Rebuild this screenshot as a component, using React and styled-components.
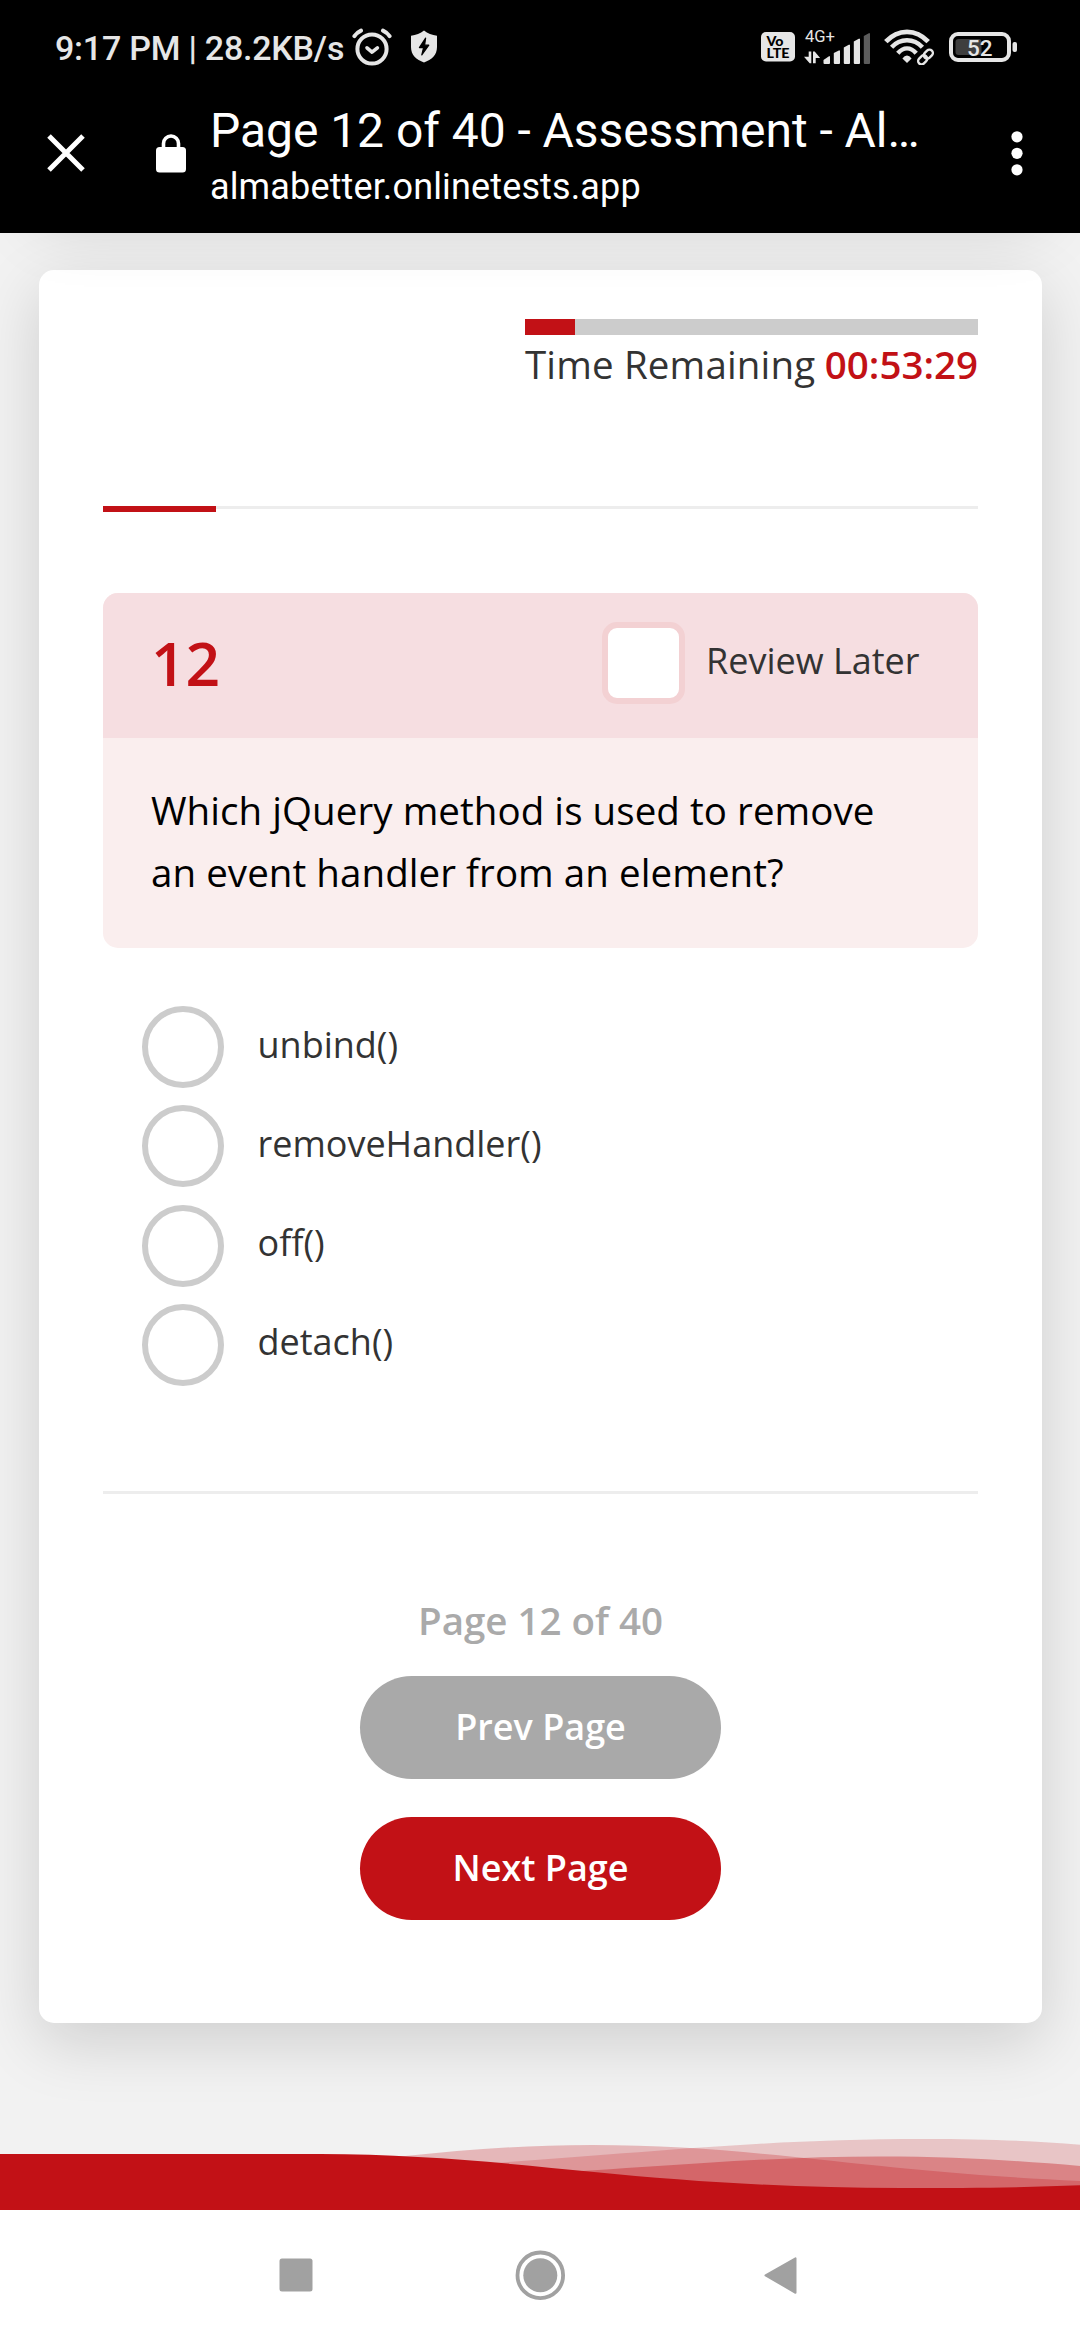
import React, { useState } from "react";
import styled, { createGlobalStyle } from "styled-components";

const RED = "#c21116";
const SANS = '"Open Sans", "Noto Sans", sans-serif';
const SYSTEM = 'Roboto, "Noto Sans", sans-serif';

const GlobalStyle = createGlobalStyle`
  * { box-sizing: border-box; }
  html, body { margin: 0; padding: 0; background: #fff; }
`;

const Screen = styled.div`
  width: 1080px;
  height: 2340px;
  display: flex;
  flex-direction: column;
  overflow: hidden;
  font-family: ${SANS};
  color: #333;
`;

/* ---------- system status bar ---------- */
const StatusBar = styled.div`
  height: 93px;
  flex: none;
  display: flex;
  align-items: center;
  justify-content: space-between;
  padding: 0 63px 0 55px;
  background: #000;
  color: #e6e6e6;
  font-family: ${SYSTEM};
  svg { display: block; flex: none; }
`;
const StatusGroup = styled.div`
  display: flex;
  align-items: center;
`;
const StatusSlot = styled.span`
  display: block;
  margin-left: ${(p) => p.$before || 0}px;
`;
const Clock = styled.span`
  width: 297px;
  padding-top: 2px;
  font-size: 34px;
  line-height: 40px;
  font-weight: 500;
  letter-spacing: -0.23px;
  white-space: nowrap;
`;

/* ---------- browser tab bar ---------- */
const TabBar = styled.header`
  height: 140px;
  flex: none;
  display: flex;
  align-items: center;
  padding: 0 57px 20px 47px;
  background: #000;
  color: #fff;
  font-family: ${SYSTEM};
  svg { display: block; flex: none; }
`;
const TabText = styled.div`
  width: 760px;
  margin-left: 24px;
  padding-top: 6px;
`;
const TabTitle = styled.div`
  font-size: 48px;
  line-height: 56px;
  letter-spacing: -0.05px;
  white-space: nowrap;
`;
const TabUrl = styled.div`
  margin-top: 5px;
  font-size: 36px;
  line-height: 46px;
  letter-spacing: 0.14px;
`;
const IconButton = styled.button`
  display: flex;
  border: 0;
  padding: 0;
  background: none;
  color: inherit;
  margin-right: ${(p) => p.$after || 0}px;
  margin-left: ${(p) => (p.$end ? "auto" : 0)};
`;

/* ---------- page ---------- */
const Page = styled.main`
  position: relative;
  height: 1977px;
  flex: none;
  display: flex;
  flex-direction: column;
  justify-content: space-between;
  padding: 37px 38px 0 39px;
  background: #f2f2f2;
  overflow: hidden;
`;
const shadow = "0 19px 64px rgba(0, 0, 0, 0.15)";
/* the card above, scrolled out of view: only its shadow reaches down */
const ScrolledCard = styled.div`
  position: absolute;
  left: 39px;
  right: 38px;
  top: -330px;
  height: 300px;
  box-shadow: ${shadow};
  pointer-events: none;
`;
const Card = styled.section`
  flex: none;
  padding: 49px 64px 103px;
  border-radius: 15px;
  background: #fff;
  box-shadow: ${shadow};
`;

const Timer = styled.div`
  width: 453px;
  margin-left: auto;
`;
const Track = styled.div`
  height: 16px;
  background: #ccc;
`;
const TrackFill = styled.div`
  height: 100%;
  background: ${RED};
`;
const TimerText = styled.div`
  display: flex;
  justify-content: space-between;
  margin-top: 3px;
  font-size: 38.5px;
  line-height: 52px;
  white-space: nowrap;
`;
const TimerLabel = styled.span`
  letter-spacing: 0.15px;
`;
const TimeLeft = styled.span`
  font-weight: 600;
  color: ${RED};
`;
const PageProgress = styled.div`
  height: 6px;
  margin: 116px 0 81px;
  background: linear-gradient(#ededed 3px, transparent 3px);
`;
const PageProgressFill = styled.div`
  height: 100%;
  background: ${RED};
`;

const Question = styled.article`
  border-radius: 15px;
  overflow: hidden;
  background: #faeeee;
`;
const QuestionHead = styled.div`
  height: 145px;
  display: flex;
  align-items: center;
  justify-content: space-between;
  padding: 0 57px 5px 48px;
  background: #f6dee1;
`;
const Number = styled.span`
  font-size: 60.5px;
  line-height: 80px;
  font-weight: 600;
  color: ${RED};
`;
const Review = styled.label`
  display: flex;
  align-items: center;
  gap: 21px;
`;
const CheckBox = styled.span`
  width: 83px;
  height: 82px;
  border: 6px solid #f3d1d3;
  border-radius: 15px;
  background: #fff;
`;
const ReviewText = styled.span`
  width: 215px;
  padding-bottom: 4px;
  font-size: 36px;
  line-height: 50px;
  white-space: nowrap;
`;
const QuestionText = styled.p`
  margin: 0;
  padding: 41px 48px 45px;
  font-size: 38.5px;
  line-height: 62px;
  letter-spacing: 0.06px;
  color: #000;
`;

const Options = styled.div`
  display: flex;
  flex-direction: column;
  gap: 17.33px;
  padding: 58px 0 105px 39px;
`;
const Option = styled.label`
  height: 82px;
  display: flex;
  align-items: center;
  gap: 33.5px;
`;
const Radio = styled.span`
  width: 82px;
  height: 82px;
  border: 6px solid #ccc;
  border-radius: 50%;
`;
const OptionText = styled.span`
  padding-bottom: 5px;
  font-size: 36px;
  line-height: 50px;
`;
const Divider = styled.div`
  height: 3px;
  background: #ededed;
`;

const Pager = styled.nav`
  display: flex;
  flex-direction: column;
  align-items: center;
  gap: 38px;
  padding-top: 101px;
`;
const PagerText = styled.div`
  margin-bottom: -7px;
  font-size: 38.5px;
  line-height: 50px;
  font-weight: 600;
  color: #aaa;
`;
const PagerButton = styled.button`
  width: 361px;
  height: 103px;
  padding: 0 0 1px;
  border: 0;
  border-radius: 52px;
  background: ${(p) => (p.$primary ? RED : "#a9a9a9")};
  color: #fff;
  font-family: ${SANS};
  font-size: 36px;
  line-height: 50px;
  font-weight: 600;
`;

const Waves = styled.svg`
  display: block;
  flex: none;
  width: 1080px;
  height: 80px;
  margin: 0 -38px 0 -39px;
`;

/* ---------- system navigation ---------- */
const NavBar = styled.div`
  height: 130px;
  flex: none;
  display: flex;
  justify-content: center;
  align-items: center;
  gap: 190px;
  background: #fff;
  svg { display: block; }
`;

function AlarmIcon() {
  return (
    <svg width="40" height="38" viewBox="0 0 40 38" fill="none" stroke="#e6e6e6" strokeLinecap="round">
      <circle cx="20" cy="21" r="14.6" strokeWidth="4" />
      <path d="M2.4 8.2Q5 4.4 9 2.6M37.6 8.2Q35 4.4 31 2.6" strokeWidth="4" />
      <path d="M15 19.8l5 4.4 5.4-4.4" strokeWidth="3.6" strokeLinejoin="round" />
    </svg>
  );
}

function ShieldIcon() {
  return (
    <svg width="28" height="33" viewBox="0 0 28 33">
      <path
        d="M14 .6C17.6 3.6 22 5.3 27 5.7V17c0 8-5.2 12.6-13 15.4C6.2 29.6 1 25 1 17V5.7C6 5.3 10.4 3.6 14 .6z"
        fill="#e6e6e6"
      />
      <path
        d="M15.6 8.2L9.4 17.6h4.2L11.800 24.8l7-9.600h-4.200z"
        fill="#000"
        stroke="#000"
        strokeWidth="1.2"
        strokeLinejoin="round"
      />
    </svg>
  );
}

function VolteIcon() {
  return (
    <svg width="34" height="30" viewBox="0 0 34 30" fontFamily="Lato, sans-serif" fontWeight="900">
      <rect width="34" height="29.5" rx="5" fill="#e6e6e6" />
      <text x="5.5" y="13.5" fontSize="13" textLength="17" lengthAdjust="spacingAndGlyphs">Vo</text>
      <text x="5.5" y="26" fontSize="13" textLength="23" lengthAdjust="spacingAndGlyphs">LTE</text>
    </svg>
  );
}

function SignalIcon() {
  return (
    <svg width="68" height="44" viewBox="0 -5 68 44" fill="#e6e6e6">
      <text x="1" y="12.4" fontSize="16.5" fontFamily="Roboto, sans-serif" textLength="30" lengthAdjust="spacingAndGlyphs">4G+</text>
      <path d="M4.7 21.500h2.600V33.200H5.700L0 26.800h4.700zM9 33.200V21.500h1.700l5.400 6.400h-4.400v5.300z" />
      <path d="M19.5 30l5.500-3.800h1V33a1 1 0 0 1-1 1h-4.500a1 1 0 0 1-1-1z" />
      <path d="M29.800 23l5-2.600h1.200V33a1 1 0 0 1-1 1h-4.200a1 1 0 0 1-1-1z" />
      <path d="M39.800 17.500l5-2.700H46V33a1 1 0 0 1-1 1h-4.200a1 1 0 0 1-1-1z" />
      <path d="M49.800 11.500l5-2.700H56V33a1 1 0 0 1-1 1h-4.200a1 1 0 0 1-1-1z" />
      <path d="M59.800 6l5-2.700H66V33a1 1 0 0 1-1 1h-4.200a1 1 0 0 1-1-1z" fill="#5c5c5c" />
    </svg>
  );
}

function WifiIcon() {
  return (
    <svg width="50" height="36" viewBox="0 0 50 36" fill="none" stroke="#e6e6e6">
      <path d="M1.8 12.7Q11 2.8 23 2.8T44.2 12.7" strokeWidth="4.8" />
      <path d="M7.6 18.2Q14 11.2 23 11.2T38.4 18.2" strokeWidth="4.4" />
      <path d="M13.8 24.3Q18 19.4 23 19.4T32.2 24.3" strokeWidth="4.4" />
      <path d="M18.4 29.4Q20.5 26.6 23 26.6T27.6 29.4L23 34z" fill="#e6e6e6" stroke="none" />
      <g strokeWidth="2.4" transform="rotate(-45 41.5 28)">
        <rect x="32.5" y="24.6" width="10" height="6.8" rx="3.4" stroke="#000" strokeWidth="6" />
        <rect x="32.5" y="24.6" width="10" height="6.8" rx="3.4" />
        <rect x="40.5" y="24.6" width="10" height="6.8" rx="3.4" />
      </g>
    </svg>
  );
}

function BatteryIcon() {
  return (
    <svg width="68" height="30" viewBox="0 0 68 30">
      <rect x="2" y="2" width="58" height="26" rx="7" fill="none" stroke="#e6e6e6" strokeWidth="4" />
      <rect x="6.5" y="7" width="26" height="16" rx="3" fill="#3e3e3e" />
      <rect x="63.5" y="10" width="4.5" height="10" rx="2" fill="#e6e6e6" />
      <text x="30.8" y="23.600" textAnchor="middle" fill="#e6e6e6" fontSize="22.500" fontWeight="500" fontFamily="Roboto, sans-serif">52</text>
    </svg>
  );
}

function WaveDrawing() {
  return (
    <Waves viewBox="0 2130 1080 80" fill={RED} aria-hidden="true">
      <path opacity="0.258" d="M300 2166C400 2158 480 2145 592 2145C760 2145 860 2171 1080 2181V2210H300z" />
      <path opacity="0.196" d="M300 2172C570 2165 700 2139 925 2139C985 2139 1035 2141 1080 2144.7V2210H300z" />
      <path opacity="0.36" d="M400 2180C600 2174 730 2156.5 880 2156.5C960 2156.5 1020 2161 1080 2166V2210H400z" />
      <path d="M0 2154H320C420 2154 510 2163.7 594 2172C690 2181.5 790 2188 901 2188C970 2188 1030 2187.500 1080 2185.300V2211H0z" />
    </Waves>
  );
}

const choices = ["unbind()", "removeHandler()", "off()", "detach()"];

export default function App() {
  const [elapsed] = useState(11);
  const [done] = useState(12.9);
  return (
    <Screen>
      <GlobalStyle />
      <StatusBar>
        <StatusGroup>
          <Clock>9:17 PM | 28.2KB/s</Clock>
          <StatusSlot><AlarmIcon /></StatusSlot>
          <StatusSlot $before={18}><ShieldIcon /></StatusSlot>
        </StatusGroup>
        <StatusGroup>
          <StatusSlot><VolteIcon /></StatusSlot>
          <StatusSlot $before={9.5}><SignalIcon /></StatusSlot>
          <StatusSlot $before={12}><WifiIcon /></StatusSlot>
          <StatusSlot $before={15}><BatteryIcon /></StatusSlot>
        </StatusGroup>
      </StatusBar>

      <TabBar>
        <IconButton $after={71} aria-label="Close">
          <svg width="38" height="38" viewBox="0 0 38 38" stroke="#fff" strokeWidth="5">
            <path d="M2 2l34 34M36 2L2 36" />
          </svg>
        </IconButton>
        <svg width="30" height="39" viewBox="0 0 30 39">
          <path d="M7.5 15V9.500a7.500 7.500 0 0 1 15 0V15" fill="none" stroke="#fff" strokeWidth="3.6" />
          <rect y="13" width="30" height="25.5" rx="3.5" fill="#fff" />
        </svg>
        <TabText>
          <TabTitle>Page 12 of 40 - Assessment - Al…</TabTitle>
          <TabUrl>almabetter.onlinetests.app</TabUrl>
        </TabText>
        <IconButton $end aria-label="Menu">
          <svg width="12" height="45" viewBox="0 0 12 45" fill="#fff">
            <circle cx="6" cy="5.8" r="5.6" />
            <circle cx="6" cy="22.3" r="5.6" />
            <circle cx="6" cy="38.8" r="5.6" />
          </svg>
        </IconButton>
      </TabBar>

      <Page>
        <Card>
          <Timer>
            <Track>
              <TrackFill style={{ width: `${elapsed}%` }} />
            </Track>
            <TimerText>
              <TimerLabel>Time Remaining</TimerLabel>
              <TimeLeft>00:53:29</TimeLeft>
            </TimerText>
          </Timer>
          <PageProgress>
            <PageProgressFill style={{ width: `${done}%` }} />
          </PageProgress>

          <Question>
            <QuestionHead>
              <Number>12</Number>
              <Review>
                <CheckBox />
                <ReviewText>Review Later</ReviewText>
              </Review>
            </QuestionHead>
            <QuestionText>
              Which jQuery method is used to remove
              <br />
              an event handler from an element?
            </QuestionText>
          </Question>

          <Options>
            {choices.map((c) => (
              <Option key={c}>
                <Radio />
                <OptionText>{c}</OptionText>
              </Option>
            ))}
          </Options>
          <Divider />

          <Pager>
            <PagerText>Page 12 of 40</PagerText>
            <PagerButton>Prev Page</PagerButton>
            <PagerButton $primary>Next Page</PagerButton>
          </Pager>
        </Card>
        <ScrolledCard />
        <WaveDrawing />
      </Page>

      <NavBar>
        <svg width="50" height="50" viewBox="0 0 50 50">
          <rect x="4.5" y="8.5" width="33" height="33" rx="2.5" fill="#a1a1a1" />
        </svg>
        <svg width="50" height="50" viewBox="0 0 50 50">
          <circle cx="25.3" cy="25.3" r="22.8" fill="none" stroke="#a1a1a1" strokeWidth="3.8" />
          <circle cx="25.3" cy="25.3" r="17" fill="#a1a1a1" />
        </svg>
        <svg width="50" height="50" viewBox="0 0 50 50">
          <path d="M10.5 25.3L40.5 8.3V42.8z" fill="#a1a1a1" stroke="#a1a1a1" strokeWidth="2" strokeLinejoin="round" />
        </svg>
      </NavBar>
    </Screen>
  );
}
